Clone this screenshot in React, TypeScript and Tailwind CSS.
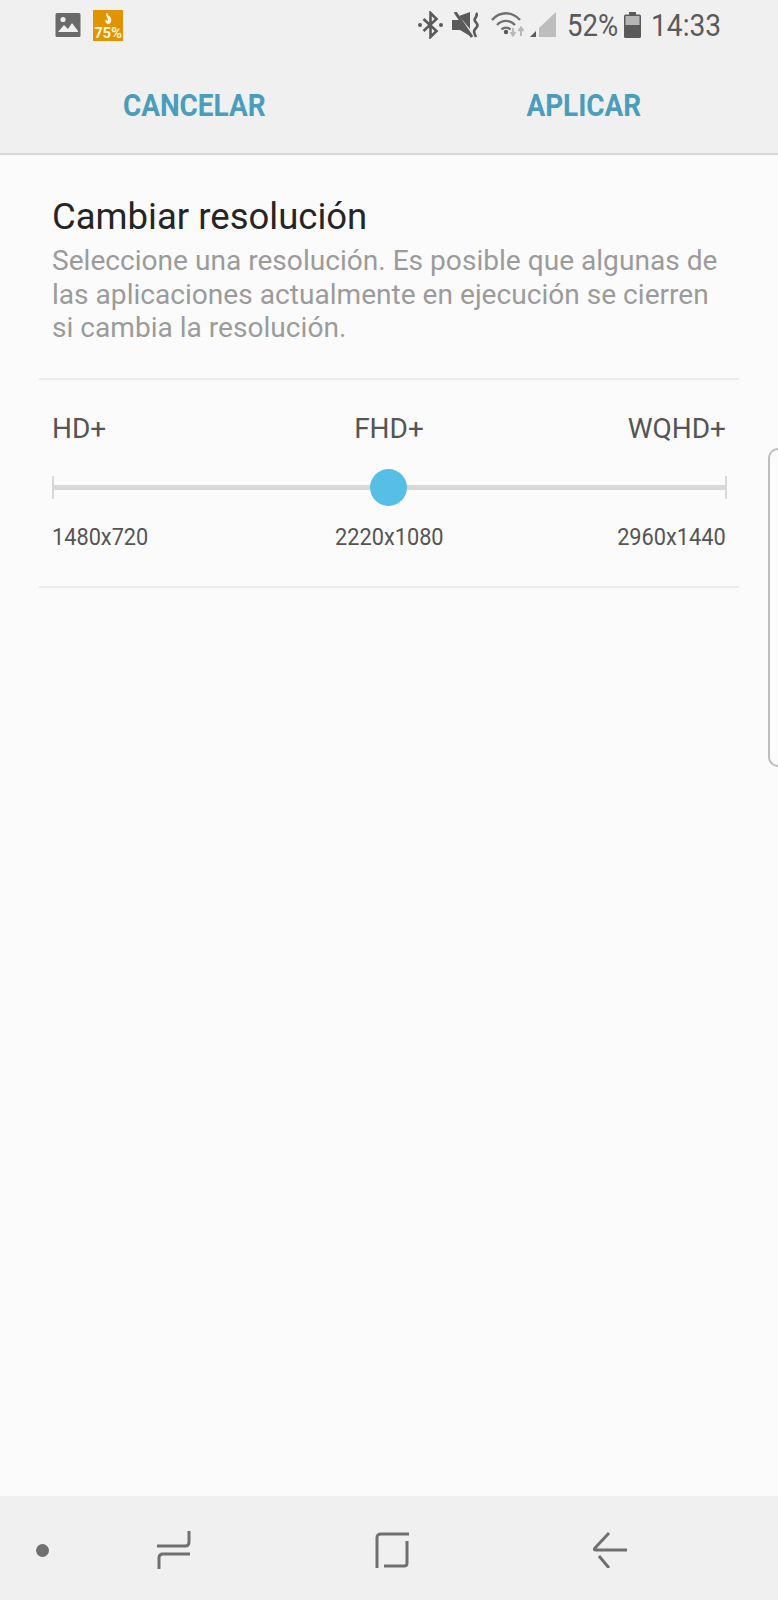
const font = "font-['Roboto',sans-serif]";

function PictureIcon() {
  return (
    <svg width="26" height="26" viewBox="0 0 26 26" className="block">
      <rect x="0.5" y="1" width="25" height="24" rx="1.5" fill="#6a6a6a" />
      <path d="M3 20l6-7 4 4 4-6 6 8v1H3z" fill="#f0f0f0" />
      <circle cx="8" cy="7.5" r="2.6" fill="#f0f0f0" />
    </svg>
  );
}

function PowerTile() {
  return (
    <div className="w-[30px] h-[31px] bg-[#e09400] flex flex-col items-center">
      <svg width="14" height="16" viewBox="0 0 14 15" className="block mt-px shrink-0">
        <path d="M6 1l1.500 3c2 1 3.500 4 2.500 6.500-.5 2-3 2.500-4.500 1.500C4 11 4 9 5 8l1.500 1.500c1-1.500 0-3-1-4.500S5 3 6 1z" fill="#fdf3dd" />
      </svg>
      <span className="text-[15px] leading-[13px] font-bold text-[#fdf3dd] tracking-[-0.2px] whitespace-nowrap">75%</span>
    </div>
  );
}

function BluetoothIcon() {
  return (
    <svg width="25" height="28" viewBox="0 0 25 28" fill="none" className="block">
      <path d="M5.500 8l13 12-6 6V2l6 6-13 12" stroke="#5a5a5a" strokeWidth="2.600" />
      <circle cx="2" cy="14" r="2" fill="#5a5a5a" />
      <circle cx="23" cy="14" r="2" fill="#5a5a5a" />
    </svg>
  );
}

function MuteIcon() {
  return (
    <svg width="28" height="26" viewBox="0 0 28 26" fill="none" className="block">
      <path d="M0 8h7L18 21v3L8 18H0z" fill="#5a5a5a" />
      <path d="M7 4l11-4v17z" fill="#5a5a5a" />
      <path d="M3 0l17 25" stroke="#5a5a5a" strokeWidth="3" />
      <path d="M24 1c3 3-3 5-1 8s4 4 1 7-2 5 0 9" stroke="#5a5a5a" strokeWidth="2.600" />
    </svg>
  );
}

function WifiIcon() {
  return (
    <svg width="34" height="26" viewBox="0 0 34 26" fill="none" className="block">
      <path d="M1 8c8-9 20-9 28 0" stroke="#707070" strokeWidth="2.400" />
      <path d="M6 13c5-5.500 13-5.500 18 0" stroke="#707070" strokeWidth="2.400" />
      <path d="M10.500 17.500c2.500-2.500 6.500-2.500 9 0" stroke="#707070" strokeWidth="2.400" />
      <circle cx="15" cy="20" r="2.200" fill="#5a5a5a" />
      <path d="M22 16v6M19.500 20l2.500 3.500 2.500-3.500" stroke="#b8b8b8" strokeWidth="2" />
      <path d="M30 24v-7M27.500 19l2.500-3.500 2.500 3.500" stroke="#b8b8b8" strokeWidth="2" />
    </svg>
  );
}

function SignalIcon() {
  return (
    <svg width="26" height="26" viewBox="0 0 26 26" className="block">
      <path d="M0 25l6-6v6z" fill="#5a5a5a" />
      <path d="M9 25V16L26 0v25z" fill="#bdbdbd" />
    </svg>
  );
}

function BatteryIcon() {
  return (
    <svg width="17" height="26" viewBox="0 0 17 26" className="block">
      <path d="M5 0h7v3H5z" fill="#5a5a5a" />
      <rect x="0" y="2.500" width="17" height="23.500" rx="1.500" fill="#5a5a5a" />
      <rect x="1.500" y="4" width="14" height="9" fill="#b5b5b5" />
    </svg>
  );
}

function StatusBar() {
  return (
    <div className="h-[50px] flex items-center pl-[55px] pr-[58px] text-[#5a5a5a]">
      <div className="flex items-center gap-3">
        <PictureIcon />
        <PowerTile />
      </div>
      <div className="ml-auto flex items-center">
        <BluetoothIcon />
        <div className="ml-[9px]"><MuteIcon /></div>
        <div className="ml-[11px]"><WifiIcon /></div>
        <div className="ml-[5px]"><SignalIcon /></div>
        <span className="w-[50px] ml-[11px] text-[32px] leading-none origin-left scale-x-[.86] whitespace-nowrap">52%</span>
        <div className="ml-[7px]"><BatteryIcon /></div>
        <span className="w-[69px] ml-[10px] text-[32px] leading-none origin-left scale-x-[.88] whitespace-nowrap">14:33</span>
      </div>
    </div>
  );
}

function ActionBar() {
  return (
    <div className="h-[105px] pt-[9px] flex items-center border-b-2 border-[#d8d8d8]">
      <div className="w-1/2 flex justify-center">
        <button className="text-[31px] font-bold text-[#4b9dbc] scale-x-[.9] whitespace-nowrap">CANCELAR</button>
      </div>
      <div className="w-1/2 flex justify-center">
        <button className="text-[31px] font-bold text-[#4b9dbc] scale-x-[.9] whitespace-nowrap">APLICAR</button>
      </div>
    </div>
  );
}

function ResolutionSlider() {
  return (
    <div className="relative h-[37px] ml-[13px] mr-[12px] flex items-center justify-center">
      <div className="absolute left-0 right-0 h-[5px] bg-[#d8d8d8]" />
      <div className="absolute left-0 w-[2px] h-[23px] bg-[#d8d8d8]" />
      <div className="absolute right-0 w-[2px] h-[23px] bg-[#d8d8d8]" />
      <div className="relative w-[37px] h-[37px] rounded-full bg-[#57bfe6] -translate-x-px" />
    </div>
  );
}

function ResolutionPicker() {
  return (
    <section className="h-[208px] pt-[32px] border-b-2 border-[#ececec]">
      <div className="grid grid-cols-3 px-[13px] text-[28px] leading-[34px] text-[#555]">
        <span>HD+</span>
        <span className="text-center">FHD+</span>
        <span className="text-right">WQHD+</span>
      </div>
      <div className="mt-[23px]">
        <ResolutionSlider />
      </div>
      <div className="mt-[18px] grid grid-cols-3 px-[13px] text-[23px] leading-[28px] text-[#555]">
        <span className="origin-left scale-x-[.945]">1480x720</span>
        <span className="text-center scale-x-[.945]">2220x1080</span>
        <span className="text-right origin-right scale-x-[.945]">2960x1440</span>
      </div>
    </section>
  );
}

function Content() {
  return (
    <main className="relative flex-1 bg-[#fbfbfb] px-[39px]">
      <section className="h-[225px] pt-[38px] pl-[13px] border-b-2 border-[#ececec]">
        <h1 className="text-[36.500px] leading-[48px] font-normal text-[#252525]">Cambiar resolución</h1>
        <p className="mt-[3px] text-[28.100px] leading-[33.500px] text-[#9b9b9b] whitespace-nowrap">
          Seleccione una resolución. Es posible que algunas de
          <br />
          las aplicaciones actualmente en ejecución se cierren
          <br />
          si cambia la resolución.
        </p>
      </section>
      <ResolutionPicker />
      {/* edge panel handle */}
      <div className="absolute right-0 top-[293px] w-[10px] h-[319px] rounded-l-[12px] border-2 border-r-0 border-[#bdbdbd]" />
    </main>
  );
}

function NavBar() {
  return (
    <nav className="h-[104px] bg-[#f0f0f0] flex items-center pt-[4px]">
      <div className="ml-[36px] w-[13px] h-[13px] rounded-full bg-[#707070]" />
      <svg width="34" height="38" viewBox="0 0 34 38" fill="none" className="ml-[108px] block">
        <path d="M0 15h28c3 0 4-2 4-4V0M33 23H6c-3 0-4 2-4 4v11" stroke="#707070" strokeWidth="3" />
      </svg>
      <svg width="34" height="36" viewBox="0 0 34 36" fill="none" className="ml-[184px] block">
        <path d="M34 2H6C3 2 2 3 2 6v30M32 9v22c0 2-1 3-3 3H9" stroke="#707070" strokeWidth="3" />
      </svg>
      <svg width="34" height="36" viewBox="0 0 34 36" fill="none" className="ml-[184px] block">
        <path d="M16 1L2 16c-1 1-1 2 1 2h31M6 24l10 12" stroke="#707070" strokeWidth="3" />
      </svg>
    </nav>
  );
}

export default function App() {
  return (
    <div className={`${font} w-[778px] h-[1600px] flex flex-col bg-[#f0f0f0] overflow-hidden`}>
      <StatusBar />
      <ActionBar />
      <Content />
      <NavBar />
    </div>
  );
}
